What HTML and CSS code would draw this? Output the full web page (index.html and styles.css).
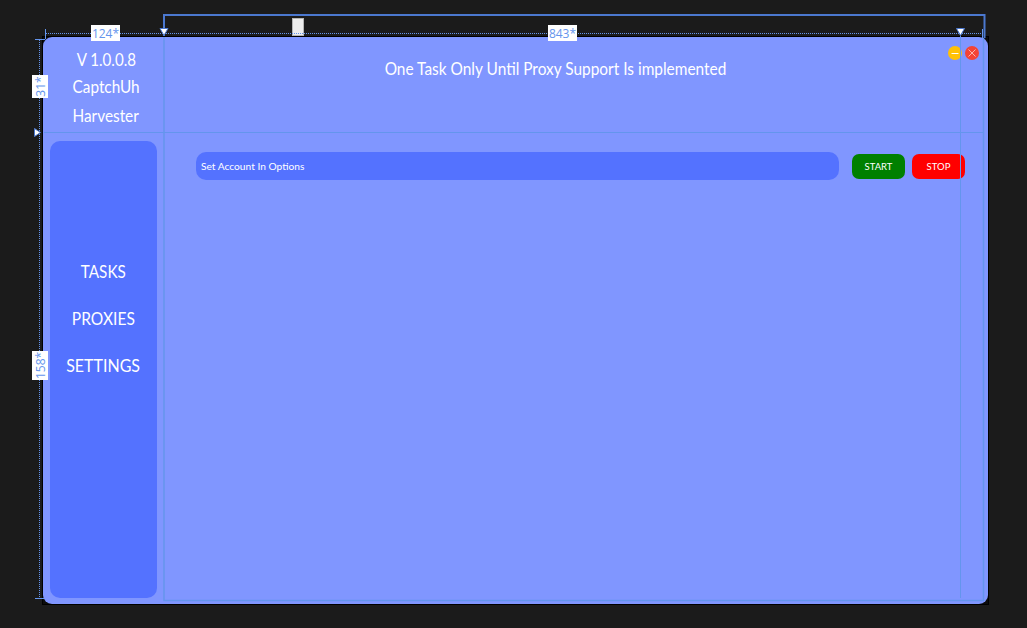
FILE: index.html
```html
<!DOCTYPE html>
<html lang="en">
<head>
<meta charset="utf-8">
<title>CaptchUh Harvester</title>
<link rel="stylesheet" href="styles.css">
</head>
<body>
<main class="designer">
  <div class="frame">
  <div class="window">
    <header class="brand">
      <span class="version">V 1.0.0.8</span>
      <span class="captch">CaptchUh</span>
      <span class="harvester">Harvester</span>
    </header>
    <header class="topbar">
      <h1 class="notice">One Task Only Until Proxy Support Is implemented</h1>
      <div class="controls">
        <svg width="14" height="14" viewBox="0 0 14 14"><circle cx="7" cy="7" r="7" fill="#ffc107"/><path d="M3.500 7.500h7" stroke="#fff"/></svg>
        <svg width="14" height="14" viewBox="0 0 14 14"><circle cx="7" cy="7" r="7" fill="#f44336"/><path d="M3.500 3.500l7 7M10.500 3.500l-7 7" stroke="#fff" stroke-width=".6"/></svg>
      </div>
    </header>
    <nav class="sidebar">
      <a class="tasks">TASKS</a>
      <a class="proxies">PROXIES</a>
      <a class="settings">SETTINGS</a>
    </nav>
    <section class="content">
      <div class="task"><span class="task-text">Set Account In Options</span></div>
      <button class="btn start"><span>START</span></button>
      <button class="btn stop"><span>STOP</span></button>
    </section>
  </div>
  </div>
  <svg class="adorners" width="1027" height="628" viewBox="0 0 1027 628">
    <rect x="292.500" y="18.500" width="11" height="17" fill="#ededed" stroke="#b5b5b5"/>
    <g fill="none" stroke="#6495ed">
      <path class="dots" d="M46 33.500H982M39.500 40V598"/>
      <path d="M45.500 29V39M982.500 29V38M35 39.500H45M35 598.500H44"/>
      <path class="guide" d="M44 132.500H983M960.500 36V598"/>
      <path class="guide bounds" d="M164 37V600.500H983.500V38"/>
      <path class="selection" d="M164 36V15H984.500V38"/>
    </g>
    <g fill="#fff" stroke="#4b78cf">
      <path d="M160 28.500H168L164 35.500Z"/>
      <path d="M956.500 28.500H964.500L960.500 35.500Z"/>
      <path d="M34.500 128.500V136.500L40.500 132.500Z"/>
    </g>
    <g fill="#fff">
      <rect x="91" y="25" width="29" height="16"/>
      <rect x="548" y="25" width="29" height="16"/>
      <rect x="32" y="75" width="16" height="23"/>
      <rect x="32" y="351" width="16" height="29"/>
    </g>
    <g class="measure" text-anchor="middle">
      <text x="105.500" y="38">124*</text>
      <text x="562.500" y="38">843*</text>
      <text transform="translate(45 86.500) rotate(-90)">31*</text>
      <text transform="translate(45 365.500) rotate(-90)">158*</text>
    </g>
  </svg>
</main>
</body>
</html>
```
FILE: styles.css
```css
* { box-sizing: border-box; }

body {
  margin: 0;
  background: #1b1b1b;
  font-family: Lato, sans-serif;
  color: #fff;
}

.designer {
  position: relative;
  width: 1027px;
  height: 628px;
  padding: 36px 38px 23px 42px;
  overflow: hidden;
}

.frame {
  width: 947px;
  height: 569px;
  border: 1px solid #000;
  background: #0c0c0c;
}

.window {
  display: grid;
  grid-template: 95px 1fr / 121px 1fr;
  width: 945px;
  height: 567px;
  border-radius: 9px;
  background: #8096ff;
}

.brand {
  display: flex;
  flex-direction: column;
  align-items: center;
  padding: 9px 0 0 5px;
  font-size: 16.500px;
  line-height: 28px;
}

.version { transform: scaleX(.915); }
.captch { margin-top: -1px; transform: scaleX(.93); }
.harvester { margin-top: 1px; transform: scaleX(.93); }

.topbar {
  display: grid;
  grid-template-columns: 1fr auto;
  align-items: start;
  padding: 9px 9px 0 0;
}

.notice {
  margin: 12px 1px 0 0;
  font-size: 16.500px;
  font-weight: 400;
  line-height: 22px;
  text-align: center;
  white-space: nowrap;
  transform: scaleX(.935);
}

.controls { display: flex; gap: 3px; }
.controls svg { display: block; }

.sidebar {
  display: flex;
  flex-direction: column;
  align-items: center;
  width: 107px;
  height: 457px;
  margin: 9px 0 0 6.500px;
  padding-top: 108px;
  border-radius: 10px;
  background: #5472ff;
  font-size: 16.500px;
  line-height: 47px;
}

.tasks { transform: scaleX(.925); }
.proxies { transform: scaleX(.945); }
.settings { transform: scaleX(.97); }

.content {
  display: flex;
  align-items: flex-start;
  padding: 20px 0 0 32px;
}

.task {
  width: 643px;
  height: 28px;
  padding-left: 5px;
  border-radius: 10px;
  background: #5472ff;
  font-size: 10.200px;
  line-height: 29px;
}

.btn {
  width: 53px;
  height: 25px;
  margin: 2px 0 0 13px;
  padding: 0;
  border: 0;
  border-radius: 7px;
  color: #fff;
  font: 9.500px/25px Lato, sans-serif;
}

.start { background: #008000; }
.stop { margin-left: 7px; background: #f00; }

.adorners { position: absolute; inset: 0; }
.dots { stroke-dasharray: 1 1; }
.guide { stroke: #6495ed; }
.bounds { stroke-width: 1.500; }
.selection { stroke: #4b78cf; stroke-width: 2; }
.measure { fill: #6495ed; font: 12px "Open Sans", sans-serif; }
```
